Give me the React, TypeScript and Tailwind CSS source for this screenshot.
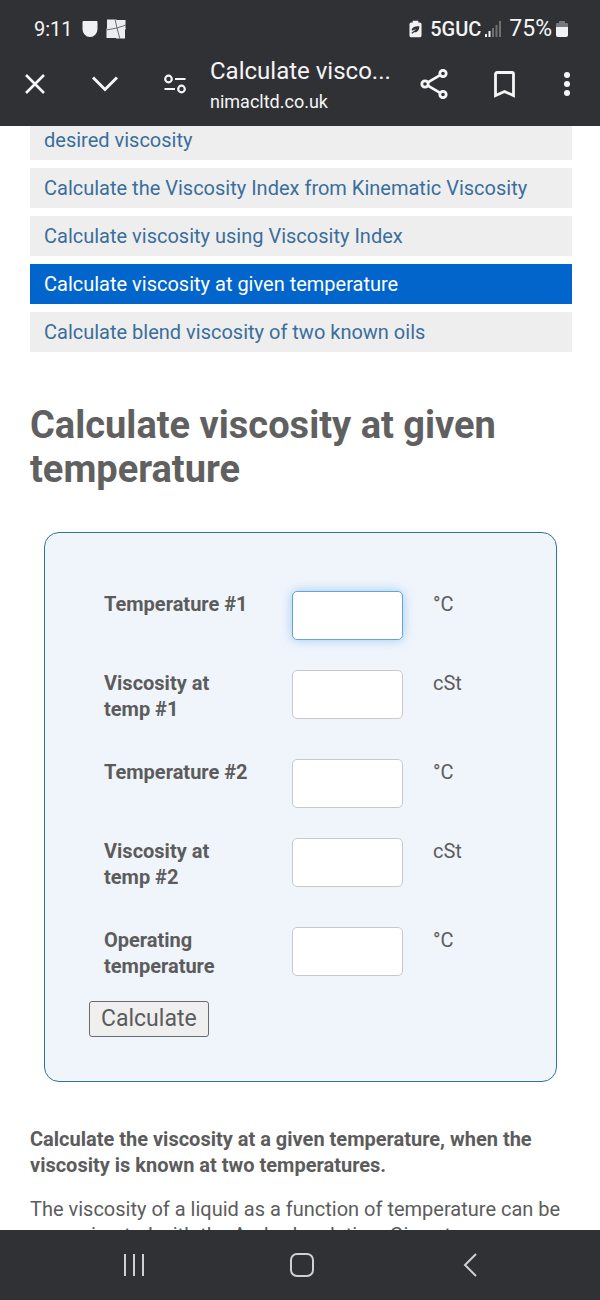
import { useState } from 'react'

const links = [
  'Calculate the Viscosity Index from Kinematic Viscosity',
  'Calculate viscosity using Viscosity Index',
  'Calculate viscosity at given temperature',
  'Calculate blend viscosity of two known oils',
]

const fields = [
  { id: 'temp1', label: 'Temperature #1', unit: '°C' },
  { id: 'visc1', label: 'Viscosity at temp #1', unit: 'cSt' },
  { id: 'temp2', label: 'Temperature #2', unit: '°C' },
  { id: 'visc2', label: 'Viscosity at temp #2', unit: 'cSt' },
  { id: 'operating', label: 'Operating temperature', unit: '°C' },
]

const StatusBar = () => (
  <div className="flex h-[58px] items-center justify-between pl-[34px] pr-8 text-[22px] leading-7">
    <div className="flex items-center gap-2">
      <span className="text-xl leading-7">9:11</span>
      <svg className="ml-px h-4 w-4" viewBox="0 0 16 16" fill="#f1f1f3">
        <path d="M1.5 0h13a1 1 0 0 1 1 1v6.5A7.5 8 0 0 1 8 16 7.5 8 0 0 1 .5 7.5V1a1 1 0 0 1 1-1z" />
      </svg>
      <svg className="h-5 w-5" viewBox="0 0 20 20" fill="none">
        <path
          fill="#ededef"
          d="M1 0l1 1 1-1 1 1 1-1 1 1 1-1 1 1 1-1 2 1h9l-1 1 1 1-1 1 1 1-1 1 1 1-1 1 1 1-1 2v9l-1-1-1 1-1-1-1 1-1-1-1 1-1-1-1 1-1-1H0l1-1-1-1 1-1-1-1 1-1-1-1 1-1-1-1 1-2z"
        />
        <path stroke="#6a6b6f" strokeWidth="1" d="M9 0l2 9 3 11M0 11l11-2 9-3" />
      </svg>
    </div>
    <div className="flex items-center">
      <svg className="mr-2 h-[18px] w-[13px]" viewBox="0 0 14 18">
        <path
          fill="#f1f1f3"
          d="M4 0h6v2h1.500a2 2 0 0 1 2 2v12a2 2 0 0 1-2 2h-9a2 2 0 0 1-2-2V4a2 2 0 0 1 2-2H4z"
        />
        <path fill="#303135" d="M3 11c-.5-3 2-5 8-5 .3 4-2 7-5.500 6.500L3.500 14l-.8-1L8 9z" />
      </svg>
      <span className="mr-1 text-xl font-medium leading-7">5GUC</span>
      <svg className="mr-2 h-4 w-4" viewBox="0 0 16 16">
        <path fill="#f1f1f3" d="M0 13h2v3H0zM3.500 10h2v6h-2z" />
        <path fill="#6f7074" d="M7 7h2v9H7zM10.500 4h2v12h-2zM14 0h2v16h-2z" />
      </svg>
      <span className="text-[23px] leading-7">75%</span>
      <svg className="ml-1 h-4 w-3" viewBox="0 0 12 16">
        <path fill="#77787c" d="M3 0h6v2h2a1 1 0 0 1 1 1v3H0V3a1 1 0 0 1 1-1h2z" />
        <path fill="#f1f1f3" d="M0 6h12v8a2 2 0 0 1-2 2H2a2 2 0 0 1-2-2z" />
      </svg>
    </div>
  </div>
)

const BrowserBar = () => (
  <div className="flex h-[68px] items-start pr-[5px]">
    <button aria-label="Close" className="flex h-[52px] w-[70px] shrink-0 items-center justify-center">
      <svg className="h-5 w-5" viewBox="0 0 20 20" fill="none" stroke="currentColor" strokeWidth="2.600">
        <path d="M1 1l18 18M19 1L1 19" />
      </svg>
    </button>
    <button aria-label="Minimize" className="flex h-[52px] w-[70px] shrink-0 items-center justify-center">
      <svg className="h-4 w-[26px]" viewBox="0 0 26 16" fill="none" stroke="currentColor" strokeWidth="3">
        <path d="M1 1.500l12 12 12-12" />
      </svg>
    </button>
    <button aria-label="Site information" className="flex h-[52px] w-[70px] shrink-0 items-center justify-center">
      <svg className="h-5 w-[22px]" viewBox="0 0 22 20" fill="none" stroke="currentColor" strokeWidth="2.200">
        <circle cx="4.500" cy="5" r="3.300" />
        <circle cx="17.500" cy="15" r="3.300" />
        <path d="M11 5h10.500M.5 15H11" />
      </svg>
    </button>
    <div className="min-w-0 flex-1">
      <p className="truncate text-2xl leading-[26px]">Calculate visco...</p>
      <p className="truncate pt-1 text-lg leading-7">nimacltd.co.uk</p>
    </div>
    <button aria-label="Share" className="flex h-[52px] w-[70px] shrink-0 items-center justify-center">
      <svg className="h-[30px] w-7" viewBox="0 0 28 30" fill="none" stroke="currentColor" strokeWidth="2.800">
        <circle cx="5" cy="15" r="3.200" />
        <circle cx="23" cy="4.500" r="3.200" />
        <circle cx="23" cy="25.500" r="3.200" />
        <path d="M7.800 13.400L20.200 6.100M7.800 16.600l12.400 7.300" />
      </svg>
    </button>
    <button aria-label="Bookmark" className="flex h-[52px] w-[70px] shrink-0 items-center justify-center">
      <svg className="h-[27px] w-[21px]" viewBox="0 0 21 27" fill="none" stroke="currentColor" strokeWidth="2.800">
        <path d="M1.500 3a1.500 1.500 0 0 1 1.500-1.500h15A1.500 1.500 0 0 1 19.500 3v21.500l-9-4-9 4z" />
      </svg>
    </button>
    <button aria-label="More" className="flex h-[52px] w-14 shrink-0 items-center justify-center">
      <svg className="h-6 w-[6px]" viewBox="0 0 6 24" fill="currentColor">
        <circle cx="3" cy="3" r="3" />
        <circle cx="3" cy="12" r="3" />
        <circle cx="3" cy="21" r="3" />
      </svg>
    </button>
  </div>
)

const Calculator = () => {
  const [values, setValues] = useState<Record<string, string>>({})

  return (
    <form
      onSubmit={(e) => e.preventDefault()}
      className="ml-[14px] mr-[15px] mt-[41px] rounded-[15px] border border-[#2f7594] bg-[#f0f5fc] px-[44px] pb-[44px] pt-[58px]"
    >
      {fields.map((field, i) => (
        <div
          key={field.id}
          className={`grid grid-cols-[4fr_3fr_2fr] items-start ${i < fields.length - 1 ? 'mb-[30px]' : 'mb-[15px]'}`}
        >
          <label htmlFor={field.id} className="mb-[7px] pl-[15px] pr-5 font-bold">
            {field.label}
          </label>
          <div className="px-[15px]">
            <input
              id={field.id}
              type="text"
              value={values[field.id] ?? ''}
              onChange={(e) => setValues({ ...values, [field.id]: e.target.value })}
              className={`block h-[49px] w-full rounded-[5px] border bg-white px-3 outline-none ${
                i === 0
                  ? 'border-[#66a5d8] shadow-[0_0_11px_rgba(102,175,233,0.6)]'
                  : 'border-[#c8c9cc]'
              }`}
            />
          </div>
          <span className="px-[15px]">{field.unit}</span>
        </div>
      ))}
      <button
        type="submit"
        className="block h-9 rounded-[3px] border border-[#6b6b6b] bg-[#efefef] px-[11px] text-[23px] leading-7"
      >
        Calculate
      </button>
    </form>
  )
}

const NavBar = () => (
  <nav className="grid h-[70px] shrink-0 grid-cols-3 bg-[#303135] pl-[50px] pr-[46px] text-[#d0d0d3]">
    <button aria-label="Recent apps" className="flex items-center justify-center">
      <svg className="h-6 w-6" viewBox="0 0 24 24" fill="none" stroke="currentColor" strokeWidth="2">
        <path d="M3 1v22M12 1v22M21 1v22" />
      </svg>
    </button>
    <button aria-label="Home" className="flex items-center justify-center">
      <svg className="h-6 w-6" viewBox="0 0 24 24" fill="none" stroke="currentColor" strokeWidth="2">
        <rect x="1" y="1" width="22" height="22" rx="6" />
      </svg>
    </button>
    <button aria-label="Back" className="flex items-center justify-center">
      <svg className="h-6 w-[14px]" viewBox="0 0 14 24" fill="none" stroke="currentColor" strokeWidth="2">
        <path d="M13 1L2 12l11 11" />
      </svg>
    </button>
  </nav>
)

export default function App() {
  return (
    <div className="flex h-screen flex-col bg-white font-[Roboto,sans-serif] text-xl leading-[26px] text-[#5c5c5c]">
      <header className="shrink-0 bg-[#303135] text-[#f5f5f6]">
        <StatusBar />
        <BrowserBar />
      </header>

      <main className="min-h-0 flex-1 overflow-hidden pl-[30px] pr-7">
        <ul className="flex flex-col gap-2 text-[#3a6e9c]">
          <li>
            <a href="#desired" className="block bg-[#eeeeee] px-[14px] pb-[7px] pt-px">
              desired viscosity
            </a>
          </li>
          {links.map((link) => (
            <li key={link}>
              <a
                href="#calculator"
                className={`block px-[14px] py-[7px] ${
                  link === 'Calculate viscosity at given temperature'
                    ? 'bg-[#0265cb] text-white'
                    : 'bg-[#eeeeee]'
                }`}
              >
                {link}
              </a>
            </li>
          ))}
        </ul>

        <h1 className="mt-[51px] text-[38px] font-bold leading-[44px] text-[#606060]">
          Calculate viscosity at given temperature
        </h1>

        <Calculator />

        <p className="mt-11 font-bold">
          Calculate the viscosity at a given temperature, when the viscosity is known at two temperatures.
        </p>
        <p className="mt-[18px]">
          The viscosity of a liquid as a function of temperature can be approximated with the Andrade
          relation. Given two temperatures
        </p>
      </main>

      <NavBar />
    </div>
  )
}
